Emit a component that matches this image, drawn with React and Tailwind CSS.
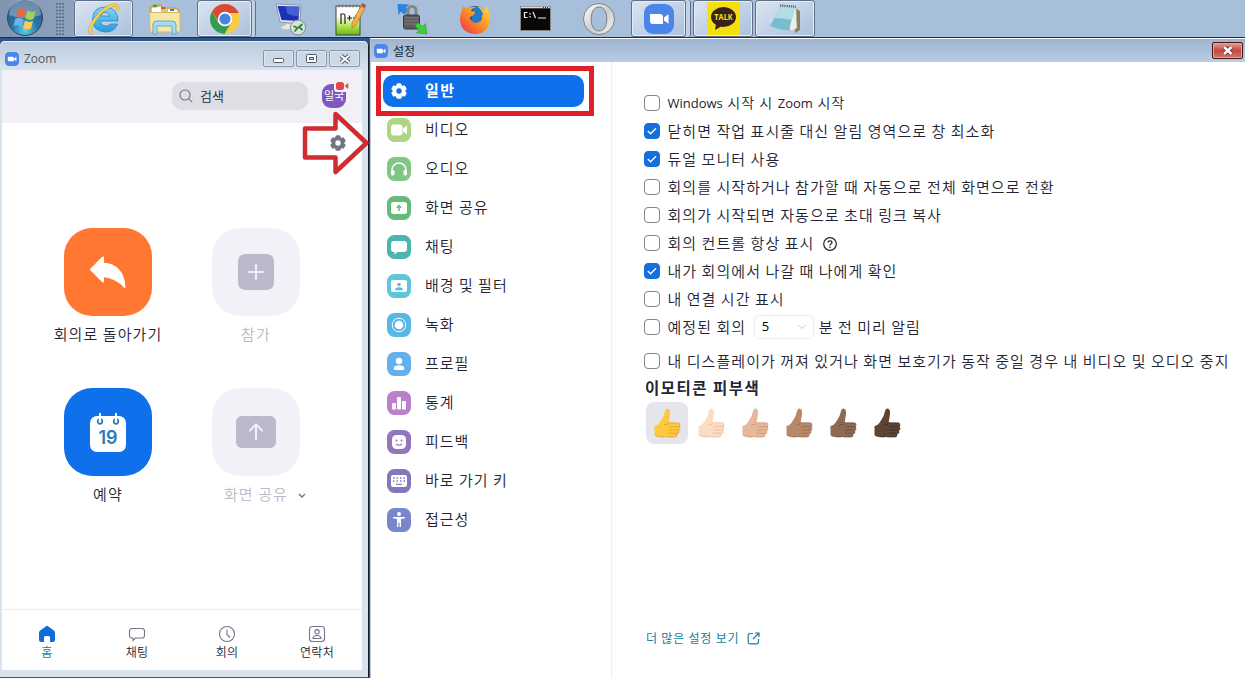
import React from 'react';

const hangul = "font-['Noto_Sans_CJK_KR',sans-serif]";

const teeth = [0, 60, 120, 180, 240, 300];

const Gear = ({ size, hole = '#0e71eb' }) => (
  <svg width={size} height={size} viewBox="0 0 16 16" fill="currentColor">
    <circle cx="8" cy="8" r="6.300" />
    {teeth.map((a) => (
      <rect key={a} x="5.400" y=".2" width="5.200" height="5" rx="1.600" transform={`rotate(${a} 8 8)`} />
    ))}
    <circle cx="8" cy="8" r="2.700" fill={hole} />
  </svg>
);

const ZoomLogo = ({ size }) => (
  <svg width={size} height={size} viewBox="0 0 30 30" className="shrink-0">
    <rect width="30" height="30" rx="9" fill="#4a86ea" />
    <path d="M6 10h10a3 3 0 0 1 3 3v7H9a3 3 0 0 1-3-3zM20 13.500l4.500-3.200v9.400L20 16.500z" fill="#fff" />
  </svg>
);

/* ---------- taskbar ---------- */

const StartOrb = () => (
  <svg width="38" height="37" viewBox="0 0 38 37">
    <defs>
      <radialGradient id="orb" cx=".5" cy=".85" r=".8">
        <stop offset="0" stopColor="#5fd0ee" />
        <stop offset=".45" stopColor="#2a78a8" />
        <stop offset="1" stopColor="#2c4f74" />
      </radialGradient>
    </defs>
    <circle cx="19" cy="18" r="17.500" fill="url(#orb)" stroke="#2d4a66" strokeWidth="1" />
    <path d="M3 15a16 16 0 0 1 32 0Q19 21 3 15" fill="#b7d3e6" opacity=".45" />
    <path d="M12 9q4-2 8 1l-2 8q-4-3-8-1z" fill="#e8683c" />
    <path d="M21.500 10.500q4 2.500 8 .5l-2 8q-4 2-8-.5z" fill="#a4cf52" />
    <path d="M9.500 18.500q4-2 8 1l-2 7.500q-4-3-8-1z" fill="#6db1ea" />
    <path d="M19 20.500q4 2.500 8 .5l-2 7.500q-4 2-8-.5z" fill="#f8cf4d" />
  </svg>
);

const Explorer = () => (
  <svg width="32" height="34" viewBox="0 0 32 34">
    <defs>
      <linearGradient id="ie" x1="0" y1="0" x2="0" y2="1">
        <stop offset="0" stopColor="#80d8fa" />
        <stop offset="1" stopColor="#279bdc" />
      </linearGradient>
    </defs>
    <path d="M30 19H12.500q.7 5 5.500 5 3 0 4.500-2h7Q27 30 17.500 30 4.500 29 4.500 17.500 5 5 17.500 5 30 6 30 19M12.500 14h9.500q-.8-3.500-4.700-3.500t-4.800 3.500" fill="url(#ie)" stroke="#2b83bd" strokeWidth=".8" />
    <path d="M4.500 31.500Q-1 29 6 19 15 5 26 3q5 0 3.500 5.500" fill="none" stroke="#c99a29" strokeWidth="3.200" />
    <path d="M4.500 31.500Q-1 29 6 19 15 5 26 3q5 0 3.500 5.500" fill="none" stroke="#f5d45c" strokeWidth="2.200" />
  </svg>
);

const Folder = () => (
  <svg width="34" height="32" viewBox="0 0 34 32">
    <path d="M2 4l4-2h7l1 3h13l4 2v20H2z" fill="#e2c565" stroke="#b99a45" />
    <path d="M4 5l9-1v5H4zM20 6l9 1v4h-9z" fill="#fff" />
    <rect x="5" y="2" width="4" height="2" fill="#35a043" />
    <rect x="13" y="4" width="4" height="2" fill="#d5542f" />
    <rect x="22" y="6" width="4" height="2" fill="#3a7fc5" />
    <path d="M1.500 9.500H32V29H2z" fill="#f7e7a5" stroke="#d4b869" />
    <path d="M5 31V21q0-3 4-3h15q4 0 4 3v10h-4v-8H9v8z" fill="#a4dbee" stroke="#5fa5c2" strokeWidth=".9" />
  </svg>
);

const Chrome = () => (
  <svg width="32" height="32" viewBox="0 0 32 32">
    <circle cx="16" cy="16" r="15" fill="#f6cc45" />
    <path d="M3 8.500A15 15 0 0 0 15.500 31l6.500-11a7.500 7.500 0 0 1-12.500 0z" fill="#2f9b57" />
    <path d="M3 8.500A15 15 0 0 1 29 8.500L30 10H16L9 18z" fill="#d8493a" />
    <circle cx="16" cy="16" r="7.200" fill="#fff" />
    <circle cx="16" cy="16" r="5.600" fill="#4a84e2" />
  </svg>
);

const Remote = () => (
  <svg width="34" height="34" viewBox="0 0 34 34">
    <path d="M2 2l25 1 -1 19-20-2z" fill="#e0e5ea" stroke="#8f9ba9" />
    <path d="M3.500 4L25.500 4.500l-1 14.500L7.500 18z" fill="#1c31b9" />
    <path d="M12 4.200l13.500.3-.7 9.500q-8 0-12-3z" fill="#5775dd" opacity=".7" />
    <path d="M13 21.500l6 .5v4l-6 2q-8-1-6-3z" fill="#e8e8e6" stroke="#aaa" strokeWidth=".5" />
    <circle cx="24" cy="25.500" r="7.500" fill="#dce1dc" stroke="#7f8b86" />
    <path d="M19.500 24l4 2-3 3.500M28.500 22L25 25l3.500 3" stroke="#28863f" strokeWidth="1.800" fill="none" />
  </svg>
);

const Notepadpp = () => (
  <svg width="34" height="34" viewBox="0 0 34 34">
    <defs>
      <linearGradient id="np" x1="0" y1="0" x2="0" y2="1">
        <stop offset=".35" stopColor="#fff" />
        <stop offset=".75" stopColor="#a8db3c" />
        <stop offset="1" stopColor="#5eb421" />
      </linearGradient>
    </defs>
    <rect x="3" y="4" width="24" height="29" fill="url(#np)" stroke="#3e4738" />
    <path d="M5 4h20" stroke="#777" strokeWidth="2.500" strokeDasharray="2 1.500" />
    <path d="M8 22V12l3 0q1 0 1 2v8M14 16h5M16.500 13.500v5M20 16h5M22.500 13.500v5" stroke="#222" strokeWidth="1.200" fill="none" />
    <path d="M19 26l0-5L28 4l4 2-9 17z" fill="#eeb34a" stroke="#a87022" strokeWidth=".7" />
    <path d="M28 4l1-3 4 2-1 3z" fill="#b45158" />
  </svg>
);

const LockSync = () => (
  <svg width="34" height="34" viewBox="0 0 34 34">
    <path d="M2.500 2l12 .5-3.500 3 2 3-4 4-3-3L3.500 13z" fill="#2a83dc" />
    <path d="M13 14V9q0-4.500 4-4.500T21 9v5" fill="none" stroke="#858585" strokeWidth="3" />
    <rect x="8.500" y="13" width="16" height="14" rx="2" fill="#5b5b5b" stroke="#3b3b3b" />
    <path d="M9.500 16h14M9.500 19h14M9.500 22h14" stroke="#808080" strokeWidth="1.200" />
    <path d="M32 32l-10.500-1 2.500-3-4-4 3-3.500 4.500 4 3-3z" fill="#3fce3b" stroke="#259228" strokeWidth=".5" />
  </svg>
);

const Firefox = () => (
  <svg width="32" height="32" viewBox="0 0 32 32">
    <defs>
      <linearGradient id="ff" x1="1" y1="0" x2="0" y2="1">
        <stop offset="0" stopColor="#ffde3b" />
        <stop offset=".5" stopColor="#ff8b24" />
        <stop offset="1" stopColor="#e92b55" />
      </linearGradient>
    </defs>
    <circle cx="16" cy="14.500" r="11.500" fill="#174b8f" />
    <path d="M14 4q6-2 10 2v9q0 6-6 7l-6-3z" fill="#237bc5" />
    <path d="M3 7l1-4 4 3q4-3 9-2-4 1-5 4l4 1q0 3-5 5 0 5 6 6 6-1 6-5-1-2 1-4-2-5-6-8 5 1 8 5l0-5q6 5 5 14Q29 31 16 31 2 30 1 17 1 11 3 7" fill="url(#ff)" />
  </svg>
);

const Cmd = () => (
  <svg width="32" height="26" viewBox="0 0 32 26">
    <rect x=".5" y=".5" width="30" height="24" fill="#080808" stroke="#858585" />
    <path d="M1 1.500h29" stroke="#dadada" strokeWidth="1.600" />
    <path d="M23 1.500h1M25 1.500h1M27 1.500h1" stroke="#333" strokeWidth="1" />
    <path d="M7.500 6.500h-3v5h3M10 7v1.500M10 10v1.500M13 6l2.500 6M18 12h8" stroke="#eee" strokeWidth="1.200" fill="none" />
  </svg>
);

const Opera = () => (
  <svg width="34" height="34" viewBox="0 0 34 34">
    <defs>
      <linearGradient id="op" x1="0" y1="0" x2="1" y2="1">
        <stop offset="0" stopColor="#fff" />
        <stop offset=".5" stopColor="#d0d0d0" />
        <stop offset="1" stopColor="#f1f1f1" />
      </linearGradient>
    </defs>
    <path fillRule="evenodd" d="M17 1.500a15.500 15.500 0 1 1 0 31a15.500 15.500 0 1 1 0-31M17 5c-5 0-7.800 5-7.800 12S12 29 17 29s7.800-5 7.800-12S22 5 17 5" fill="url(#op)" stroke="#777" strokeWidth=".9" />
  </svg>
);

const Kakao = () => (
  <svg width="33" height="33" viewBox="0 0 33 33">
    <rect width="33" height="33" fill="#f6e00c" />
    <ellipse cx="16.500" cy="15" rx="12.500" ry="10" fill="#372220" />
    <path d="M9 22l-1 6 7-4z" fill="#372220" />
    <text x="16.500" y="18" fontSize="8.200" fontWeight="700" fontFamily="Open Sans, sans-serif" fill="#f6e00c" textAnchor="middle" textLength="18.500" lengthAdjust="spacingAndGlyphs">TALK</text>
  </svg>
);

const Notepad = () => (
  <svg width="34" height="34" viewBox="0 0 34 34">
    <path d="M27 6l5 3 0 19-5 3z" fill="#8a8061" />
    <path d="M13 4l15 1 1 21-6 4z" fill="#eceee9" stroke="#a9aba5" strokeWidth=".6" />
    <path d="M13 4l14 1-6 23q-7 1-19-4z" fill="#78bdce" />
    <path d="M13 4l14 1-3.500 13q-9-2-17-2z" fill="#b0dde6" />
    <path d="M12 3.500l16 1.200" stroke="#5f6a6d" strokeWidth="2.400" strokeDasharray="1.200 1" />
  </svg>
);

const activeTask = 'flex h-[37px] items-center justify-center rounded-[3px] border border-[#5f7189] bg-linear-to-br from-[#dbe5f2] to-[#abc0db] shadow-[inset_0_0_0_1px_#e4ecf6]';
const plainTask = 'flex h-full items-center justify-center';

const Taskbar = () => (
  <div className="flex h-[38px] shrink-0 border-b border-[#1b2f49] bg-[#a7bfdb]">
    <div className="flex w-[74px] bg-linear-to-r from-[#8295b0] to-[#8ea3bf] pl-[6px]">
      <StartOrb />
      <svg width="8" height="32" className="mt-[3px] ml-[12px]">
        <path d="M1 0v32M4 0v32M7 0v32" stroke="#3f5069" strokeWidth="1.400" strokeDasharray="1.400 2" />
      </svg>
    </div>
    <div className={`${activeTask} w-[59px]`}><Explorer /></div>
    <div className={`${plainTask} w-[64px]`}><Folder /></div>
    <div className={`${activeTask} w-[55px]`}><Chrome /></div>
    <div className="mr-px h-[37px] w-[4px] rounded-r-[3px] border-r border-[#5f7189] bg-[#c2d2e6]" />
    <div className={`${plainTask} w-[67px]`}><Remote /></div>
    <div className={`${plainTask} w-[52px]`}><Notepadpp /></div>
    <div className={`${plainTask} w-[72px]`}><LockSync /></div>
    <div className={`${plainTask} w-[54px]`}><Firefox /></div>
    <div className={`${plainTask} w-[68px]`}><Cmd /></div>
    <div className={`${plainTask} w-[58px]`}><Opera /></div>
    <div className={`${activeTask} ml-[3px] w-[55px]`}><ZoomLogo size={30} /></div>
    <div className="mr-[2px] h-[37px] w-[5px] rounded-r-[3px] border-r border-[#5f7189] bg-[#c2d2e6]" />
    <div className={`${activeTask} w-[60px]`}><Kakao /></div>
    <div className={`${activeTask} ml-[2px] w-[60px]`}><Notepad /></div>
  </div>
);

/* ---------- main window ---------- */

const CaptionButton = ({ children }) => (
  <div className="flex h-[17px] w-[31px] items-center justify-center rounded-[2px] border border-[#8795a8] bg-[#cbd8e6] shadow-[inset_0_0_0_1px_#dce6f0]">
    {children}
  </div>
);

const Tile = ({ color, label, muted, children, caret }) => (
  <div className="flex h-[160px] w-[148px] flex-col items-center">
    <div className={`flex size-[88px] items-center justify-center rounded-[28px] ${color}`}>{children}</div>
    <div className={`mt-[6px] flex h-[24px] items-center text-[15px] font-[350] tracking-[1.1px] whitespace-nowrap ${muted ? 'text-[#babacb]' : 'text-[#232333]'}`}>
      {caret && <span className="w-[18px]" />}
      <span>{label}</span>
      {caret && (
        <svg width="8" height="6" viewBox="0 0 8 6" className="mt-[4px] ml-[10px]">
          <path d="M1 1l3 3 3-3" fill="none" stroke="#6e7680" strokeWidth="1.400" />
        </svg>
      )}
    </div>
  </div>
);

const Tab = ({ label, active, children }) => (
  <div className="flex w-[90px] flex-col items-center">
    <svg width="18" height="18" viewBox="0 0 18 18" fill="none" stroke="#747487" strokeWidth="1.100">{children}</svg>
    <span className={`h-[18px] text-[12px] leading-[17px] font-[350] tracking-[0.3px] ${active ? 'text-[#0f7fa5]' : 'text-[#232333]'}`}>{label}</span>
  </div>
);

const MainWindow = () => (
  <div className="flex h-full w-[369px] shrink-0 flex-col rounded-t-[5px] border-r border-b border-r-[#111c2c] border-b-[#46566b] bg-[#d7e3ef]">
    <div className="flex h-[29px] shrink-0 items-center rounded-t-[5px] border-t border-[#e4edf5] bg-linear-to-b from-[#bccbdc] to-[#d6e2ee] pt-[5px] pl-[5px]">
      <ZoomLogo size={14} />
      <span className="ml-[5px] font-['Open_Sans',sans-serif] text-[12px] text-[#4f5763]">Zoom</span>
      <div className="ml-auto flex gap-[2px] pr-[8px]">
        <CaptionButton>
          <svg width="12" height="6" className="mt-[4px]"><rect x=".5" y=".5" width="10" height="4" rx="1" fill="#fff" stroke="#4f5968" /></svg>
        </CaptionButton>
        <CaptionButton>
          <svg width="11" height="9"><rect x=".5" y=".5" width="10" height="8" rx="1" fill="#fff" stroke="#4f5968" /><rect x="3.500" y="3.500" width="4" height="2" fill="#cbd8e6" stroke="#4f5968" /></svg>
        </CaptionButton>
        <CaptionButton>
          <svg width="12" height="10" viewBox="0 0 12 10"><path d="M2 1.500l8 7M10 1.500l-8 7" stroke="#4f5968" strokeWidth="4" /><path d="M2 1.500l8 7M10 1.500l-8 7" stroke="#fff" strokeWidth="2" /></svg>
        </CaptionButton>
      </div>
    </div>
    <div className="mr-[6px] mb-[7px] ml-[2px] flex flex-1 flex-col bg-white">
      <div className="flex h-[53px] shrink-0 items-center bg-[#f1f0f6] pb-[2px] pl-[170px]">
        <div className="flex h-[28px] w-[136px] items-center rounded-[10px] bg-[#dfdee5] pl-[7px]">
          <svg width="14" height="14" viewBox="0 0 14 14" fill="none" stroke="#747487" strokeWidth="1.100">
            <circle cx="6" cy="6" r="5" /><path d="M9.600 9.600l3.600 3.600" />
          </svg>
          <span className="ml-[7px] text-[13px] font-[350] text-[#232333]">검색</span>
        </div>
        <div className="relative ml-[14px] flex size-[24px] items-center justify-center rounded-[9px] bg-[#7e57c2] text-[11px] whitespace-nowrap text-white">
          일국
          <svg width="15" height="11" className="absolute -top-[3px] left-[12px]">
            <rect width="15" height="11" fill="#f1f0f6" rx="3" />
            <rect x="2" y="1" width="8" height="8" rx="2.500" fill="#e04848" />
            <path d="M11 5l3-2.500v5z" fill="#e04848" stroke="#e04848" strokeWidth=".6" />
          </svg>
        </div>
      </div>
      <div className="flex h-[40px] shrink-0 items-center justify-end pr-[16px] text-[#747487]"><Gear size={16} hole="#fff" /></div>
      <div className="mt-[65px] ml-[32px] flex w-[296px] flex-wrap">
        <Tile color="bg-[#ff7730]" label="회의로 돌아가기">
          <svg width="38" height="34" viewBox="0 0 38 34" fill="#fff" stroke="#fff" strokeWidth="2" strokeLinejoin="round">
            <path d="M2 14.500L14 2.500V8.500Q34 10 35.500 32Q28 22.500 14 21V26.500Z" />
          </svg>
        </Tile>
        <Tile color="bg-[#f2f1f8]" label="참가" muted>
          <svg width="36" height="36" viewBox="0 0 36 36"><rect width="36" height="36" rx="7" fill="#babacc" /><path d="M18 11v14M11 18h14" stroke="#f2f1f8" strokeWidth="2" strokeLinecap="round" /></svg>
        </Tile>
        <Tile color="bg-[#0e71eb]" label="예약">
          <svg width="36" height="40" viewBox="0 0 36 40">
            <rect y="4" width="36" height="36" rx="7" fill="#fff" />
            <circle cx="10" cy="9.500" r="2.300" fill="none" stroke="#2c79b8" strokeWidth="1.700" />
            <circle cx="26" cy="9.500" r="2.300" fill="none" stroke="#2c79b8" strokeWidth="1.700" />
            <path d="M10 1v8M26 1v8" stroke="#fff" strokeWidth="2" />
            <text x="18" y="31.500" textAnchor="middle" fontFamily="Inter, sans-serif" fontSize="18" fontWeight="600" fill="#2c79b8">19</text>
          </svg>
        </Tile>
        <Tile color="bg-[#f2f1f8]" label="화면 공유" muted caret>
          <svg width="40" height="32" viewBox="0 0 40 32"><rect width="40" height="32" rx="6" fill="#babacc" /><path d="M20 23V9M14 14.500l6-6 6 6" fill="none" stroke="#f2f1f8" strokeWidth="2" strokeLinecap="round" /></svg>
        </Tile>
      </div>
      <div className="mt-auto flex h-[61px] border-t border-[#ebebf0] pt-[15px]">
        <Tab label="홈" active>
          <path d="M1 8Q1 6.500 2.200 5.600L8 1.200Q9 .5 10 1.200L15.800 5.600Q17 6.500 17 8V14.500Q17 17 14.500 17H12V12.500Q12 11 10.500 11H7.500Q6 11 6 12.500V17H3.500Q1 17 1 14.500Z" fill="#0e6cdf" stroke="none" />
        </Tab>
        <Tab label="채팅">
          <path d="M4 3.500h10a2.500 2.500 0 0 1 2.500 2.500v4.500a2.500 2.500 0 0 1-2.500 2.500H7.500l-2.500 2.500V13H4a2.500 2.500 0 0 1-2.500-2.500V6A2.500 2.500 0 0 1 4 3.500z" />
        </Tab>
        <Tab label="회의"><circle cx="9" cy="9" r="7.500" /><path d="M9 4.500V9.500l3 3" /></Tab>
        <Tab label="연락처">
          <rect x="1.500" y="1.500" width="15" height="15" rx="3" /><circle cx="9" cy="6.800" r="2.200" /><path d="M5 13.500q0-3 4-3t4 3z" />
        </Tab>
      </div>
    </div>
  </div>
);

/* ---------- settings window ---------- */

const sections = [
  ['비디오', '#aed581', <g><rect x="4" y="6.500" width="11.500" height="11" rx="3" /><path d="M16 10.500l4-3v9l-4-3z" /></g>],
  ['오디오', '#81c784', <g><path d="M5 15.500V13a7 7 0 0 1 14 0v2.500" fill="none" stroke="#fff" strokeWidth="1.400" /><rect x="4" y="13" width="3.500" height="5.500" rx="1.500" /><rect x="16.500" y="13" width="3.500" height="5.500" rx="1.500" /></g>],
  ['화면 공유', '#66bb7a', <g><rect x="4" y="6" width="16" height="12" rx="2.500" /><path d="M12 15v-5M9.800 11.800L12 9.500l2.200 2.300" fill="none" stroke="#66bb7a" strokeWidth="1.500" /></g>],
  ['채팅', '#4db6ac', <path d="M7 6h10a3 3 0 0 1 3 3v5a3 3 0 0 1-3 3h-6.500L7.500 19.500V17H7a3 3 0 0 1-3-3V9a3 3 0 0 1 3-3z" />],
  ['배경 및 필터', '#5fc5dc', <g><rect x="4" y="6" width="16" height="12" rx="2" /><circle cx="12" cy="10.500" r="1.800" fill="#5fb9dc" /><path d="M8 16.200q0-3 4-3t4 3z" fill="#5fb9dc" /></g>],
  ['녹화', '#58b8e5', <g><circle cx="12" cy="12" r="4.300" /><circle cx="12" cy="12" r="6.800" fill="none" stroke="#fff" strokeWidth="1" /></g>],
  ['프로필', '#64b0ec', <g><circle cx="12" cy="9" r="3.200" /><path d="M6.800 16.500q0-3.300 5.200-3.300t5.200 3.300q0 1.500-1.500 1.500H8.300q-1.500 0-1.500-1.500z" /></g>],
  ['통계', '#ba80cb', <g><rect x="5" y="12" width="4" height="6.500" rx=".8" /><rect x="10" y="6" width="4" height="12.500" rx=".8" /><rect x="15" y="10" width="4" height="8.500" rx=".8" /></g>],
  ['피드백', '#9175bf', <g><rect x="5" y="5" width="14" height="14" rx="4.500" /><circle cx="9.500" cy="10.500" r="1" fill="#9175bf" /><circle cx="14.500" cy="10.500" r="1" fill="#9175bf" /><path d="M9 14q3 2.500 6 0" stroke="#9175bf" strokeWidth="1.200" fill="none" /></g>],
  ['바로 가기 키', '#8278ba', <g><rect x="4" y="6" width="16" height="12" rx="2" /><path d="M6 9h12M6 12h12" stroke="#8278ba" strokeWidth="1.500" strokeDasharray="1.500 2" /><path d="M9 15.300h6" stroke="#8278ba" strokeWidth="1.200" /></g>],
  ['접근성', '#7986cb', <g><circle cx="12" cy="6" r="2" /><path d="M6 9h12v1.300l-4 .6V19h-1.400v-4.500h-1.200V19H10v-8.100l-4-.6z" /></g>],
];

const Check = ({ on }) => (
  <span className={`flex size-[16px] shrink-0 items-center justify-center rounded-[4px] border ${on ? 'border-[#1670dc] bg-[#1670dc]' : 'border-[#85858d] bg-white'}`}>
    {on && (
      <svg width="12" height="10" viewBox="0 0 12 10" className="shrink-0"><path d="M1.800 5l2.800 2.800L10 2.200" fill="none" stroke="#fff" strokeWidth="1.300" /></svg>
    )}
  </span>
);

const Option = ({ on, children }) => (
  <div className="flex h-[28px] items-center text-[15px] font-[350] tracking-[1.05px] whitespace-nowrap text-[#232333]">
    <Check on={on} />
    <div className="ml-[7.500px] flex items-center">{children}</div>
  </div>
);

const Thumb = ({ fill, line }) => (
  <svg width="27" height="30" viewBox="0 0 27 30">
    <path d="M.5 18Q4 17.500 7 12.500Q10 8.500 11 3Q11.600.3 13.600.5Q16.500 1 16 6Q15.500 10 14.600 14.500L22 16V29H10Q3 29 .5 27Z" fill={fill} />
    <g fill={fill} stroke={line} strokeWidth=".6">
      <rect x="12" y="14.800" width="14" height="4.500" rx="2.200" />
      <rect x="13" y="18.600" width="13" height="4" rx="2" />
      <rect x="13" y="22" width="12" height="3.800" rx="1.900" />
      <rect x="12" y="25.200" width="11" height="3.800" rx="1.900" />
    </g>
    <path d="M10 15.500q4-1.500 6 0v3l-1 1v8.500h-5z" fill={fill} />
    <path d="M9.500 17.500q2-1.500 5-1.500M1 27.500q4 1.700 10 1.500" fill="none" stroke={line} strokeWidth=".7" />
  </svg>
);

const tones = [
  ['#fcc93f', '#d9962a'],
  ['#fbdcc4', '#e0b192'],
  ['#e6b899', '#c28c6b'],
  ['#b88968', '#8f6246'],
  ['#8d6a51', '#664530'],
  ['#5c4535', '#37271e'],
];

const SettingsWindow = () => (
  <div className="flex min-w-0 flex-1 flex-col border-l border-[#b8c6d8] bg-white">
    <div className="flex h-[24px] shrink-0 items-center border-t border-white bg-linear-to-b from-[#9db4d0] to-[#b9cde6] pl-[3px]">
      <ZoomLogo size={14} />
      <span className="ml-[5px] text-[12px] text-[#20242c]">설정</span>
      <div className="ml-auto flex h-[17px] w-[31px] items-center justify-center rounded-[2px] border border-[#48151b] bg-linear-to-b from-[#dfa096] via-[#c1483c] to-[#d0766b] shadow-[inset_0_0_0_1px_#e2a49d]">
        <svg width="12" height="9" viewBox="0 0 12 9"><path d="M2 1l7.500 7M9.500 1L2 8" stroke="#6e2f35" strokeWidth="4" /><path d="M2 1l7.500 7M9.500 1L2 8" stroke="#fff" strokeWidth="2.400" /></svg>
      </div>
      <span className="w-[2px]" />
    </div>
    <div className="flex flex-1">
      <div className="flex w-[241px] shrink-0 flex-col border-r border-[#ededf2] pt-[9px]">
        <div className="relative flex h-[39px] items-center">
          <div className="ml-[12px] flex h-[32px] w-[201px] items-center rounded-[10px] bg-[#0e71eb] pl-[8px] text-white">
            <Gear size={16} />
            <span className="ml-[18px] text-[15px] font-bold tracking-[1.5px]">일반</span>
          </div>
          <div className="absolute top-[-5px] left-[5px] h-[50px] w-[218px] border-[5px] border-[#df2029]" />
        </div>
        {sections.map(([label, color, glyph]) => (
          <div key={label} className="flex h-[39px] items-center pl-[16px]">
            <svg width="24" height="24" viewBox="0 0 24 24" fill="#fff">
              <rect width="24" height="24" rx="7.500" fill={color} />
              {glyph}
            </svg>
            <span className="ml-[14px] text-[15px] font-[350] tracking-[1px] text-[#232333]">{label}</span>
          </div>
        ))}
      </div>
      <div className="flex flex-1 flex-col pt-[27px] pl-[32px]">
        <Option>
          <span className="flex items-baseline gap-[4.500px] text-[14px]">
            <span className="font-['Open_Sans',sans-serif] text-[13px] font-normal tracking-normal">Windows</span>
            <span>시작 시</span>
            <span className="font-['Open_Sans',sans-serif] text-[13px] font-normal tracking-normal">Zoom</span>
            <span>시작</span>
          </span>
        </Option>
        <Option on>닫히면 작업 표시줄 대신 알림 영역으로 창 최소화</Option>
        <Option on>듀얼 모니터 사용</Option>
        <Option>회의를 시작하거나 참가할 때 자동으로 전체 화면으로 전환</Option>
        <Option>회의가 시작되면 자동으로 초대 링크 복사</Option>
        <Option>
          회의 컨트롤 항상 표시
          <svg width="14" height="14" viewBox="0 0 14 14" className="mt-[2px] ml-[9px]" fill="none" stroke="#232333" strokeWidth="1.200">
            <circle cx="7" cy="7" r="6.300" />
            <path d="M5 5.600Q5 3.800 7 3.800T9 5.500Q9 6.400 7.800 7Q7 7.400 7 8.500M7 9.600v1.300" />
          </svg>
        </Option>
        <Option on>내가 회의에서 나갈 때 나에게 확인</Option>
        <Option>내 연결 시간 표시</Option>
        <Option>
          예정된 회의
          <span className="mr-[5px] ml-[7.500px] flex h-[24px] w-[60px] items-center justify-between rounded-[5px] border border-[#ececf1] pr-[7px] pl-[7px]">
            <span className="font-['Open_Sans',sans-serif] text-[13px] font-normal text-black">5</span>
            <svg width="8" height="6" viewBox="0 0 8 6"><path d="M.5 1L4 4.500 7.500 1" fill="none" stroke="#c5c5cd" /></svg>
          </span>
          분 전 미리 알림
        </Option>
        <div className="h-[6px]" />
        <Option>내 디스플레이가 꺼져 있거나 화면 보호기가 동작 중일 경우 내 비디오 및 오디오 중지</Option>
        <div className="flex h-[27px] items-center pl-px pb-px text-[15.500px] font-bold tracking-[1.5px] text-[#232333]">이모티콘 피부색</div>
        <div className="flex gap-[2px] pl-[2px]">
          {tones.map(([fill, line], i) => (
            <div key={fill} className={`flex size-[42px] items-center justify-center rounded-[8px] ${i === 0 ? 'bg-[#e6e5ec]' : ''}`}>
              <Thumb fill={fill} line={line} />
            </div>
          ))}
        </div>
        <div className="mt-auto mb-[30px] flex h-[20px] items-center pl-[2px] text-[12px] tracking-[0.8px] text-[#0f7e9d]">
          더 많은 설정 보기
          <svg width="13" height="13" viewBox="0 0 13 13" className="ml-[8px]" fill="none" stroke="#187f9f" strokeWidth="1.200">
            <path d="M6 1.500H3A1.800 1.800 0 0 0 1.200 3.300V10A1.800 1.800 0 0 0 3 11.800H9.700A1.800 1.800 0 0 0 11.500 10V7M8 1H12V5M12 1L6 7" />
          </svg>
        </div>
      </div>
    </div>
  </div>
);

export default function App() {
  return (
    <div className={`relative flex h-[678px] w-[1245px] flex-col overflow-hidden bg-[#2f5487] ${hangul}`}>
      <Taskbar />
      <div className="flex min-h-0 flex-1">
        <div className="mr-px flex pt-[3px]"><MainWindow /></div>
        <SettingsWindow />
      </div>
      <svg width="68" height="66" viewBox="0 0 68 66" className="absolute top-[110px] left-[302px]">
        <path d="M3 18.500H33.500V4L64.500 33L33.500 62V47.500H3Z" fill="none" stroke="#cf2c31" strokeWidth="4.500" strokeLinejoin="round" />
      </svg>
    </div>
  );
}
